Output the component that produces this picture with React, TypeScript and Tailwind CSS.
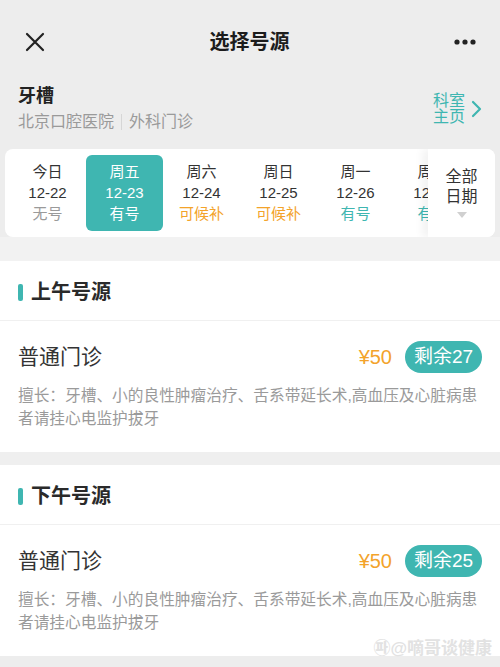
import React from "react";

const TEAL = "#3fb6b1";

const dates = [
  { w: "今日", d: "12-22", s: "无号", c: "text-[#9a9a9a]" },
  { w: "周五", d: "12-23", s: "有号", c: "text-white", sel: true },
  { w: "周六", d: "12-24", s: "可候补", c: "text-[#f3a32a]" },
  { w: "周日", d: "12-25", s: "可候补", c: "text-[#f3a32a]" },
  { w: "周一", d: "12-26", s: "有号", c: "text-[#3fb6b1]" },
  { w: "周二", d: "12-27", s: "有号", c: "text-[#3fb6b1]" },
];

function Section({ title, left }: { title: string; left: number }) {
  return (
    <div className="bg-white">
      <div className="flex h-[60px] items-center pt-[3px] px-[18px] border-b border-[#f0f0f0]">
        <div className="w-[5px] h-[17px] rounded-[2px] bg-[#3fb6b1]" />
        <div className="ml-[8px] text-[20px] leading-[28px] font-semibold text-[#2a2a2a]">{title}</div>
      </div>
      <div className="px-[18px] pt-[20px] pb-[22px]">
        <div className="flex items-center h-[32px]">
          <div className="flex-1 text-[21px] leading-[28px] text-[#333]">普通门诊</div>
          <div className="text-[20px] leading-[24px] text-[#f3a32a]">¥50</div>
          <div className="ml-[13px] h-[32px] w-[77px] rounded-full bg-[#3fb6b1] flex items-center justify-center text-white text-[19px] leading-[24px]">
            剩余{left}
          </div>
        </div>
        <div className="mt-[11px] text-[15.7px] leading-[23px] text-[#9a9a9a]">
          擅长：牙槽、小的良性肿瘤治疗、舌系带延长术,高血压及心脏病患者请挂心电监护拔牙
        </div>
      </div>
    </div>
  );
}

export default function App() {
  return (
    <div
      className="relative w-[500px] h-[667px] overflow-hidden bg-[#ededed]"
      style={{ fontFamily: '"Liberation Sans", "Noto Sans CJK SC", sans-serif' }}
    >
      {/* nav */}
      <div className="flex h-[84px] items-center justify-between px-[24px]">
        <svg width="20" height="20" viewBox="0 0 20 20" className="ml-[1px]">
          <path d="M2 2 L18 18 M18 2 L2 18" stroke="#222" strokeWidth="2.2" strokeLinecap="round" />
        </svg>
        <div className="text-[20px] leading-[28px] font-semibold text-[#1c1c1c]">选择号源</div>
        <svg width="22" height="6" viewBox="0 0 22 6">
          <circle cx="3" cy="3" r="2.6" fill="#222" />
          <circle cx="11" cy="3" r="2.6" fill="#222" />
          <circle cx="19" cy="3" r="2.6" fill="#222" />
        </svg>
      </div>

      {/* dept */}
      <div className="flex items-start justify-between px-[18px] pb-[15px]">
        <div>
          <div className="text-[18px] leading-[24px] font-semibold text-[#222]">牙槽</div>
          <div className="mt-[2px] flex items-center text-[16px] leading-[24px] text-[#9a9a9a]">
            <span>北京口腔医院</span>
            <span className="mx-[7px] h-[16px] w-[1px] bg-[#d6d6d6]" />
            <span>外科门诊</span>
          </div>
        </div>
        <div className="flex items-center mt-[9px]">
          <div className="w-[33px] text-[16px] leading-[16px] text-[#3fb6b1]">科室主页</div>
          <svg width="12" height="18" viewBox="0 0 12 18" className="ml-[4px]">
            <path d="M3 2 L10 9 L3 16" stroke={TEAL} strokeWidth="2.2" fill="none" strokeLinecap="round" strokeLinejoin="round" />
          </svg>
        </div>
      </div>

      {/* dates */}
      <div className="mx-[5px] h-[88px] rounded-[8px] bg-white overflow-hidden flex">
        <div className="flex-1 min-w-0 overflow-hidden">
          <div className="flex pl-[4px] py-[6px] h-full">
            {dates.map((x) => (
              <div
                key={x.d}
                className={`shrink-0 w-[77px] flex flex-col items-center pt-[6px] text-[15px] leading-[21px] rounded-[6px] ${
                  x.sel ? "bg-[#3fb6b1] text-white" : "text-[#333]"
                }`}
              >
                <div>{x.w}</div>
                <div>{x.d}</div>
                <div className={x.c}>{x.s}</div>
              </div>
            ))}
          </div>
        </div>
        <div className="shrink-0 h-full w-[67px] bg-white shadow-[-6px_0_8px_rgba(0,0,0,0.05)] flex flex-col items-center pt-[18px]">
          <div className="w-[33px] text-center text-[16px] leading-[20px] text-[#333]">全部日期</div>
          <svg width="12" height="8" viewBox="0 0 12 8" className="mt-[4px]">
            <path d="M1 1 L11 1 L6 7 Z" fill="#d0d0d0" />
          </svg>
        </div>
      </div>

      <div className="h-[24px] bg-[#f2f2f2]" />

      <Section title="上午号源" left={27} />
      <div className="h-[13px] bg-[#efefef]" />
      <Section title="下午号源" left={25} />

      <div className="absolute right-[8px] bottom-[8px] text-[17px] leading-[20px] text-[#e2e2e2] font-semibold">
        ㉺@嘀哥谈健康
      </div>
    </div>
  );
}
